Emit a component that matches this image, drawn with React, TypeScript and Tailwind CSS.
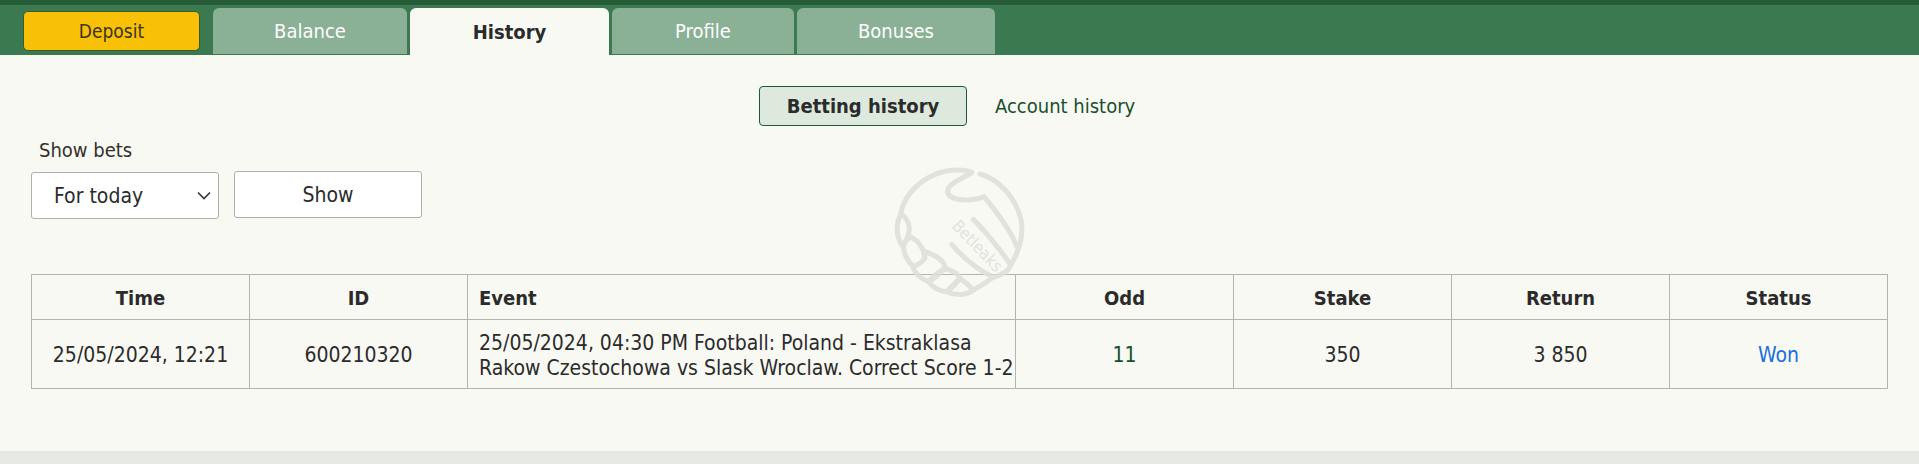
import React from "react";

const font = { fontFamily: '"DejaVu Sans", Tahoma, sans-serif' };

function Tab({ label, active, w }: { label: string; active?: boolean; w: string }) {
  return (
    <div
      className={
        active
          ? `${w} h-[47px] rounded-t-[6px] bg-[#f9f9f4] flex items-center justify-center font-bold text-[20px] text-[#2b2b2b]`
          : `${w} h-[46px] rounded-t-[6px] bg-[#8ab095] flex items-center justify-center text-[20px] text-white`
      }
    >
      {label}
    </div>
  );
}

function Watermark() {
  return (
    <svg
      viewBox="0 0 480 480"
      className="absolute left-[880px] top-[150px] w-[160px] h-[160px] pointer-events-none"
      fill="none"
      stroke="#dedfda"
      strokeWidth="15"
      strokeLinecap="round"
      strokeLinejoin="round"
      opacity="0.85"
    >
      <path d="M275 66C240 54 190 60 150 80C100 106 70 150 62 190" />
      <path d="M300 72C360 88 412 150 424 215C430 260 420 300 385 358C370 372 355 378 338 382C320 398 300 408 280 420" />
      <path d="M275 68C250 85 215 95 205 115C195 140 225 150 260 150C285 150 300 145 312 140C345 180 395 245 410 290" />
      <path d="M280 208C320 250 365 305 390 342" />
      <path d="M215 283C250 325 300 362 340 382" />
      <path d="M64 192C90 210 100 250 66 286C46 255 48 215 64 192Z" />
      <path d="M70 290C74 276 84 264 95 262C120 276 132 300 135 325C125 338 112 346 100 350C84 335 72 312 70 290Z" />
      <path d="M135 305C165 315 190 332 195 350C182 370 160 388 145 395C122 385 104 368 98 350" />
      <path d="M145 395C165 372 185 355 205 358C222 365 236 374 240 385C228 402 214 416 200 425C180 425 158 412 145 395Z" />
      <path d="M200 425C212 412 228 396 240 385C256 396 270 408 280 420C260 436 225 438 200 425Z" />
      <text
        x="290"
        y="304"
        fontSize="50"
        fill="#dedfda"
        stroke="none"
        textAnchor="middle"
        transform="rotate(46 290 290)"
        fontFamily="DejaVu Sans, sans-serif"
      >
        Betleaks
      </text>
    </svg>
  );
}

export default function App() {
  const th = "border border-[#b5b5b0] font-bold text-[20px] text-center align-middle h-[45px] p-0 pt-[2px]";
  const td = "border border-[#b5b5b0] text-[21px] text-center align-middle p-0 pt-[3px]";
  return (
    <div
      style={font}
      className="relative w-[1919px] h-[464px] bg-[#f9f9f4] text-[20px] text-[#2b2b2b] overflow-hidden flex flex-col font-stretch-condensed"
    >
      <div className="h-[55px] shrink-0 border-t-[5px] border-[#265c38] bg-[#3b7a50] flex items-start pl-[23px]">
        <button className="mt-[6px] w-[177px] h-[40px] rounded-[5px] border border-[#3a5a2a] bg-[#f8c006] text-[19px] text-[#3b3520] flex items-center justify-center">
          Deposit
        </button>
        <div className="ml-[13px] mt-[3px] flex items-start gap-[3px]">
          <Tab label="Balance" w="w-[194px]" />
          <Tab label="History" w="w-[199px]" active />
          <Tab label="Profile" w="w-[182px]" />
          <Tab label="Bonuses" w="w-[198px]" />
        </div>
      </div>

      <div className="flex-1 flex flex-col pl-[31px] pr-[31px]">
        <div className="mt-[31px] flex items-center pl-[728px]">
          <div className="w-[208px] h-[40px] rounded-[4px] border border-[#1d5a33] bg-[#dde9dd] font-bold flex items-center justify-center">
            Betting history
          </div>
          <div className="ml-[28px] text-[#16502b]">Account history</div>
        </div>

        <div className="mt-[12px] ml-[8px] h-[24px] leading-[24px] text-[#33302c]">Show bets</div>

        <div className="mt-[9px] flex items-start gap-[15px]">
          <div className="relative w-[188px] h-[47px] mt-[1px]">
            <select className="w-full h-full appearance-none rounded-[3px] border border-[#b0b0aa] bg-white pl-[22px] pt-[2px] text-[21px] text-[#2b2b2b] outline-none">
              <option>For today</option>
            </select>
            <svg
              viewBox="0 0 14 9"
              className="absolute right-[8px] top-[19px] w-[14px] h-[9px] pointer-events-none"
              fill="none"
              stroke="#333"
              strokeWidth="1.6"
            >
              <path d="M1 1.5L7 7.5L13 1.5" />
            </svg>
          </div>
          <button className="w-[188px] h-[47px] rounded-[3px] border border-[#b0b0aa] bg-white pt-[3px] text-[21px] flex items-center justify-center">
            Show
          </button>
        </div>

        <table className="mt-[55px] w-[1856px] table-fixed border-collapse bg-transparent">
          <colgroup>
            <col className="w-[218px]" />
            <col className="w-[218px]" />
            <col className="w-[548px]" />
            <col className="w-[218px]" />
            <col className="w-[218px]" />
            <col className="w-[218px]" />
            <col className="w-[218px]" />
          </colgroup>
          <thead>
            <tr>
              <th className={th}>Time</th>
              <th className={th}>ID</th>
              <th className={`${th} !text-left pl-[11px]`}>Event</th>
              <th className={th}>Odd</th>
              <th className={th}>Stake</th>
              <th className={th}>Return</th>
              <th className={th}>Status</th>
            </tr>
          </thead>
          <tbody>
            <tr className="h-[69px]">
              <td className={td}>25/05/2024, 12:21</td>
              <td className={td}>600210320</td>
              <td className={`${td} !text-left pl-[11px] leading-[25px] whitespace-nowrap`}>
                25/05/2024, 04:30 PM Football: Poland - Ekstraklasa
                <br />
                Rakow Czestochowa vs Slask Wroclaw. Correct Score 1-2
              </td>
              <td className={`${td} text-[#16502b]`}>11</td>
              <td className={td}>350</td>
              <td className={td}>3 850</td>
              <td className={`${td} text-[#1a6fdc]`}>Won</td>
            </tr>
          </tbody>
        </table>
      </div>

      <div className="h-[13px] shrink-0 bg-[#e6e8e3]" />
      <Watermark />
    </div>
  );
}
